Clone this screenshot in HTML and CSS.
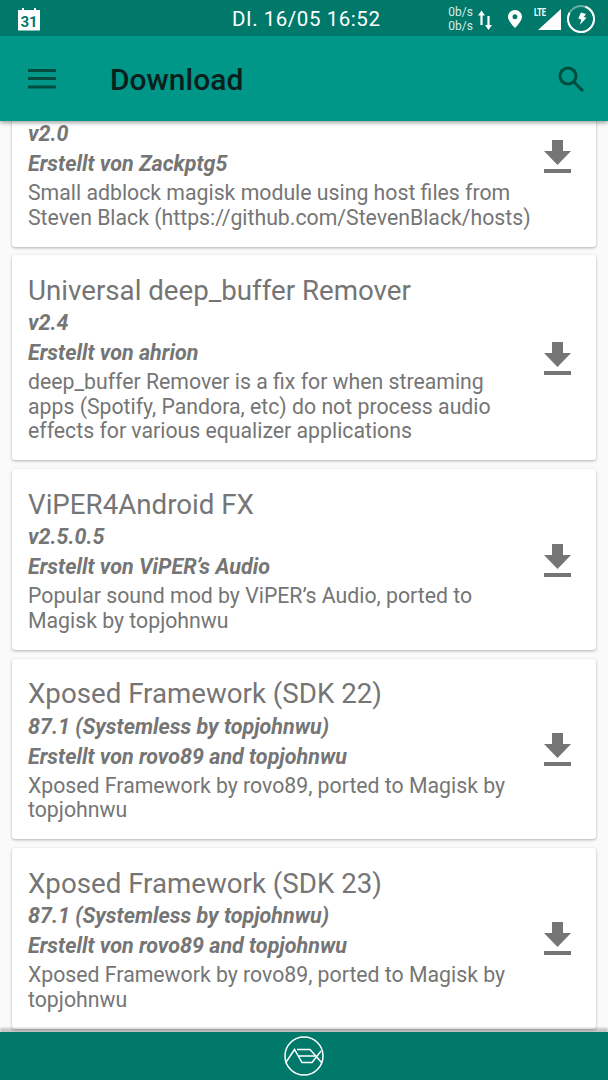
FILE: index.html
```html
<!DOCTYPE html>
<html lang="en">
<head>
    <meta charset="UTF-8">
    <meta name="viewport" content="width=device-width, initial-scale=1.0">
    <title>Download</title>
    <link rel="stylesheet" href="styles.css">
</head>
<body>
    <div class="app">
        <div class="status-bar">
            <svg class="cal-icon" width="24" height="24" viewBox="0 0 24 24">
                <path fill="#fff" d="M1 3h4V1h2v2h10V1h2v2h4v20.500H1z"/>
                <text x="12" y="20" text-anchor="middle" class="cal-num">31</text>
            </svg>
            <div class="status-time">DI. 16/05 16:52</div>
            <div class="status-right">
                <div class="net-speed"><span>0b/s</span><span>0b/s</span></div>
                <svg class="arrows-icon" width="14" height="24" viewBox="0 0 14 24">
                    <path fill="#fff" d="M3.500 3.500L7 8.500H4.600V18H2.400V8.500H0zM10.500 23L7 18h2.400V9h2.200v9H14z"/>
                </svg>
                <svg class="pin-icon" width="14" height="18" viewBox="0 0 14 18">
                    <path fill="#fff" fill-rule="evenodd" d="M7 0c3.900 0 7 3 7 6.800C14 11.500 7 18 7 18S0 11.500 0 6.800C0 3 3.100 0 7 0zm0 4.300a2.500 2.500 0 1 0 0 5 2.500 2.500 0 0 0 0-5z"/>
                </svg>
                <div class="signal">
                    <span class="lte">LTE</span>
                    <svg width="23" height="21" viewBox="0 0 23 21"><path fill="#fff" d="M23 0v21H0z"/></svg>
                </div>
                <svg class="battery-icon" width="28" height="28" viewBox="0 0 28 28">
                    <circle cx="14" cy="14" r="13" fill="none" stroke="#fff" stroke-opacity="0.4" stroke-width="1.800"/>
                    <circle cx="14" cy="14" r="13" fill="none" stroke="#fff" stroke-width="2" stroke-dasharray="63 82" transform="rotate(-70 14 14)"/>
                    <path fill="#fff" d="M14 7.500l5 1.500-2.200 3 2.700.8-6.500 7 1.300-5.300-3-.9z"/>
                </svg>
            </div>
        </div>

        <header class="toolbar">
            <svg class="menu-icon" width="28" height="20" viewBox="0 0 28 20">
                <path fill="#004d40" d="M0 0h28v3H0zM0 8h28v3H0zM0 16.500h28v3H0z"/>
            </svg>
            <h1>Download</h1>
            <svg class="search-icon" width="26" height="26" viewBox="0 0 26 26">
                <circle cx="10" cy="10" r="8" fill="none" stroke="#004d40" stroke-width="3"/>
                <path d="M15.500 15.500L25 25" stroke="#004d40" stroke-width="3" fill="none"/>
            </svg>
        </header>

        <main class="list">
            <div class="card first">
                <div class="card-text">
                    <div class="title"></div>
                    <div class="version">v2.0</div>
                    <div class="author">Erstellt von Zackptg5</div>
                    <div class="desc">Small adblock magisk module using host files from Steven Black (https://github.com/StevenBlack/hosts)</div>
                </div>
                <svg class="dl-icon" viewBox="0 0 27 33"><path d="M8 0h11v11h8L13.500 25 0 11h8zM0 29h27v4H0z"/></svg>
            </div>

            <div class="card">
                <div class="card-text">
                    <div class="title">Universal deep_buffer Remover</div>
                    <div class="version">v2.4</div>
                    <div class="author">Erstellt von ahrion</div>
                    <div class="desc">deep_buffer Remover is a fix for when streaming apps (Spotify, Pandora, etc) do not process audio effects for various equalizer applications</div>
                </div>
                <svg class="dl-icon" viewBox="0 0 27 33"><path d="M8 0h11v11h8L13.500 25 0 11h8zM0 29h27v4H0z"/></svg>
            </div>

            <div class="card">
                <div class="card-text">
                    <div class="title">ViPER4Android FX</div>
                    <div class="version">v2.5.0.5</div>
                    <div class="author">Erstellt von ViPER’s Audio</div>
                    <div class="desc">Popular sound mod by ViPER’s Audio, ported to Magisk by topjohnwu</div>
                </div>
                <svg class="dl-icon" viewBox="0 0 27 33"><path d="M8 0h11v11h8L13.500 25 0 11h8zM0 29h27v4H0z"/></svg>
            </div>

            <div class="card">
                <div class="card-text">
                    <div class="title">Xposed Framework (SDK 22)</div>
                    <div class="version">87.1 (Systemless by topjohnwu)</div>
                    <div class="author">Erstellt von rovo89 and topjohnwu</div>
                    <div class="desc">Xposed Framework by rovo89, ported to Magisk by topjohnwu</div>
                </div>
                <svg class="dl-icon" viewBox="0 0 27 33"><path d="M8 0h11v11h8L13.500 25 0 11h8zM0 29h27v4H0z"/></svg>
            </div>

            <div class="card">
                <div class="card-text">
                    <div class="title">Xposed Framework (SDK 23)</div>
                    <div class="version">87.1 (Systemless by topjohnwu)</div>
                    <div class="author">Erstellt von rovo89 and topjohnwu</div>
                    <div class="desc">Xposed Framework by rovo89, ported to Magisk by topjohnwu</div>
                </div>
                <svg class="dl-icon" viewBox="0 0 27 33"><path d="M8 0h11v11h8L13.500 25 0 11h8zM0 29h27v4H0z"/></svg>
            </div>
        </main>

        <footer class="nav-bar">
            <svg width="42" height="42" viewBox="0 0 42 42" fill="none" stroke="#fff" stroke-width="1.500">
                <circle cx="21" cy="21" r="19"/>
                <path d="M2.500 28L11.500 14.500 19 27.500H29L38 16M14 14.500H27L39 28M16 21H33"/>
            </svg>
        </footer>
    </div>
</body>
</html>
```
FILE: styles.css
```css
* {
    box-sizing: border-box;
}

body {
    margin: 0;
    padding: 0;
    font-family: 'Roboto', sans-serif;
    background: #fafafa;
}

.app {
    width: 608px;
    height: 1080px;
    display: flex;
    flex-direction: column;
    overflow: hidden;
}

.status-bar {
    height: 36px;
    flex: none;
    background: #00796b;
    color: #fff;
    display: flex;
    align-items: center;
    padding: 2px 13px 0 17px;
}

.cal-num {
    font-size: 15px;
    font-weight: 700;
    fill: #00796b;
}

.status-time {
    margin-left: 191px;
    font-size: 20.500px;
    letter-spacing: 0.55px;
    white-space: nowrap;
}

.status-right {
    margin-left: auto;
    display: flex;
    align-items: center;
}

.net-speed {
    display: flex;
    flex-direction: column;
    font-size: 12px;
    line-height: 14px;
    color: #d8ece9;
}

.arrows-icon {
    margin-left: 5px;
}

.pin-icon {
    margin-left: 16px;
}

.signal {
    margin-left: 16px;
    position: relative;
    width: 23px;
    height: 21px;
}

.lte {
    position: absolute;
    top: -2px;
    left: -4px;
    font-size: 10px;
    line-height: 12px;
    font-weight: 700;
    transform: scaleX(0.75);
    transform-origin: left;
}

.signal svg {
    display: block;
}

.battery-icon {
    margin-left: 6px;
}

.toolbar {
    height: 85px;
    flex: none;
    background: #009688;
    display: flex;
    align-items: center;
    padding: 0 24px 0 28px;
    box-shadow: 0 2px 4px rgba(0, 0, 0, 0.35);
    position: relative;
    z-index: 2;
}

.toolbar h1 {
    margin: 2px 0 0 54px;
    font-size: 30px;
    font-weight: 500;
    color: #0a1f1c;
}

.search-icon {
    margin-left: auto;
}

.list {
    flex: 1;
    min-height: 0;
    padding: 0 12px;
    display: flex;
    flex-direction: column;
    gap: 8.900px;
}

.card {
    background: #fff;
    border-radius: 3px;
    box-shadow: 0 1px 3px rgba(0, 0, 0, 0.3);
    display: flex;
    align-items: center;
    padding: 17.500px 25px 16.500px 16px;
    flex: none;
}

.card.first {
    margin-top: -55px;
}

.card-text {
    flex: 1;
    min-width: 0;
    color: #757575;
}

.title {
    font-size: 27.700px;
    line-height: 35.500px;
    min-height: 35.500px;
}

.version,
.author {
    font-size: 21.500px;
    line-height: 30px;
    font-weight: 700;
    font-style: italic;
}

.desc {
    margin-top: 2px;
    font-size: 21.250px;
    line-height: 24.500px;
}

.dl-icon {
    flex: none;
    width: 27px;
    height: 33px;
    margin-left: 10px;
    fill: #757575;
}

.nav-bar {
    height: 48px;
    flex: none;
    background: #00796b;
    display: flex;
    align-items: center;
    justify-content: center;
    box-shadow: 0 -4px 2px rgba(0, 0, 0, 0.2);
    position: relative;
}
```
